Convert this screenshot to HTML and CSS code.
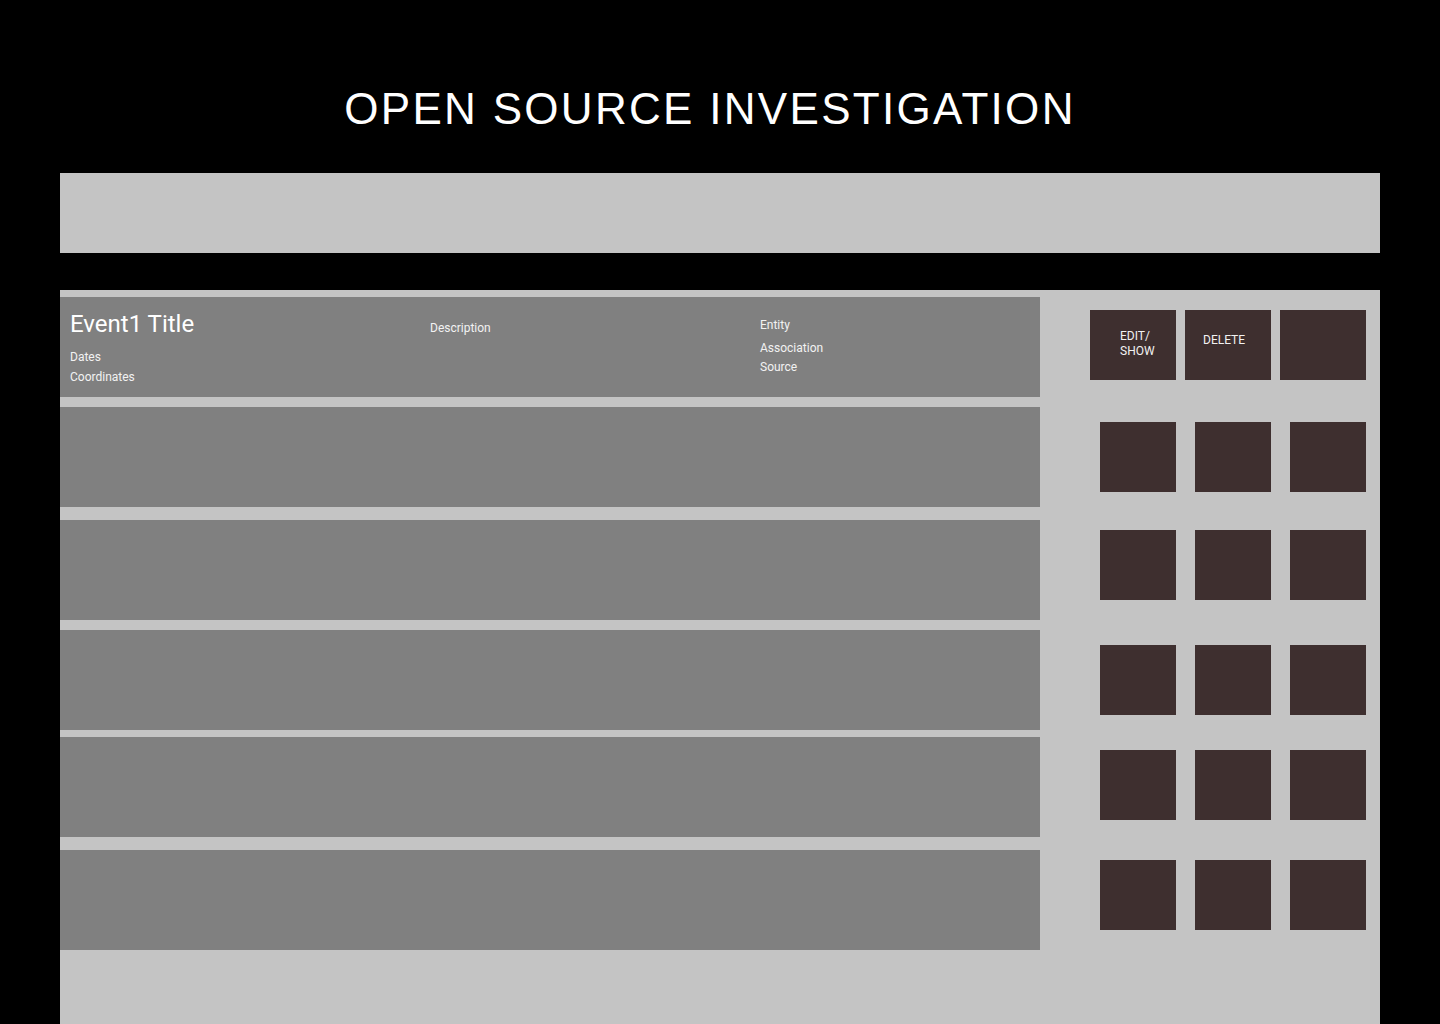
FILE: index.html
```html
<!DOCTYPE html>
<html lang="en">
<head>
  <meta charset="UTF-8" />
  <meta name="viewport" content="width=device-width, initial-scale=1.0"/>
  <title>Open Source Investigation</title>
  <link rel="stylesheet" href="styles.css">
</head>
<body>
  <header class="page-header">
    <h1 class="page-title">OPEN SOURCE INVESTIGATION</h1>
  </header>

  <div class="search-bar"></div>

  <main class="board">
    <section class="event-list">
      <article class="event-row">
        <div class="event-main">
          <h2 class="event-title">Event1 Title</h2>
          <p class="event-dates">Dates</p>
          <p>Coordinates</p>
        </div>
        <div class="event-desc">
          <p>Description</p>
        </div>
        <div class="event-meta">
          <p class="event-entity">Entity</p>
          <p>Association</p>
          <p>Source</p>
        </div>
      </article>
      <article class="event-row"></article>
      <article class="event-row"></article>
      <article class="event-row"></article>
      <article class="event-row"></article>
      <article class="event-row"></article>
    </section>

    <aside class="action-list">
      <div class="action-row action-row-first">
        <button class="action-btn btn-edit"><span>EDIT/<br>SHOW</span></button>
        <button class="action-btn btn-delete"><span>DELETE</span></button>
        <button class="action-btn"></button>
      </div>
      <div class="action-row">
        <button class="action-btn"></button>
        <button class="action-btn"></button>
        <button class="action-btn"></button>
      </div>
      <div class="action-row">
        <button class="action-btn"></button>
        <button class="action-btn"></button>
        <button class="action-btn"></button>
      </div>
      <div class="action-row">
        <button class="action-btn"></button>
        <button class="action-btn"></button>
        <button class="action-btn"></button>
      </div>
      <div class="action-row">
        <button class="action-btn"></button>
        <button class="action-btn"></button>
        <button class="action-btn"></button>
      </div>
      <div class="action-row">
        <button class="action-btn"></button>
        <button class="action-btn"></button>
        <button class="action-btn"></button>
      </div>
    </aside>
  </main>
</body>
</html>
```

FILE: styles.css
```css
body {
  margin: 0;
  background: #000;
  font-family: Roboto, 'Liberation Sans', sans-serif;
  color: #f2f2f2;
}
p {
  margin: 0;
}
.page-header {
  padding-top: 87px;
  padding-right: 20px;
  text-align: center;
}
.page-title {
  margin: 0;
  font-family: 'Liberation Sans', Arial, sans-serif;
  font-weight: 400;
  font-size: 44px;
  line-height: 44px;
  letter-spacing: 2.3px;
  color: #fff;
}
.search-bar {
  height: 80px;
  margin: 42px 60px 0;
  background: #c4c4c4;
}
.board {
  display: flex;
  margin: 37px 60px 0;
  min-height: 760px;
  background: #c4c4c4;
}

/* event rows */
.event-list {
  width: 980px;
  padding-top: 7px;
}
.event-row {
  box-sizing: border-box;
  height: 100px;
  padding: 14px 0 0 10px;
  background: #808080;
  display: grid;
  grid-template-columns: 360px 330px 1fr;
  align-items: start;
}
.event-row:nth-child(2) { margin-top: 10px; }
.event-row:nth-child(3) { margin-top: 13px; }
.event-row:nth-child(4) { margin-top: 10px; }
.event-row:nth-child(5) { margin-top: 7px; }
.event-row:nth-child(6) { margin-top: 13px; }
.event-title {
  margin: 0 0 10px;
  font-size: 24px;
  line-height: 26px;
  font-weight: 400;
  color: #fff;
}
.event-main p,
.event-desc p {
  font-size: 12px;
  line-height: 20px;
}
.event-desc {
  margin-top: 7px;
}
.event-meta {
  margin-top: 5px;
  font-size: 12px;
  line-height: 19px;
}
.event-entity {
  margin-bottom: 4px;
}

/* action buttons */
.action-list {
  flex: 1;
  padding: 20px 14px 0 0;
  display: flex;
  flex-direction: column;
  align-items: flex-end;
}
.action-row {
  display: flex;
  gap: 19px;
}
.action-row:nth-child(2) { margin-top: 42px; }
.action-row:nth-child(3) { margin-top: 38px; }
.action-row:nth-child(4) { margin-top: 45px; }
.action-row:nth-child(5) { margin-top: 35px; }
.action-row:nth-child(6) { margin-top: 40px; }
.action-row-first {
  gap: 9px;
}
.action-btn {
  display: flex;
  align-items: flex-start;
  justify-content: flex-start;
  box-sizing: border-box;
  width: 76px;
  height: 70px;
  padding: 0;
  border: none;
  background: #3e2f2f;
  color: #f2f2f2;
  font-family: Roboto, sans-serif;
  font-size: 12px;
  line-height: 15px;
  text-align: left;
  cursor: pointer;
}
.action-row-first .action-btn {
  width: 86px;
}
.btn-edit {
  padding: 19px 0 0 30px;
}
.btn-delete {
  padding: 23px 0 0 18px;
}
```
